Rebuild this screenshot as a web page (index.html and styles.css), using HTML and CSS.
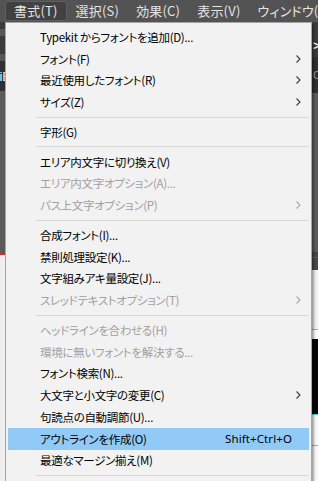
FILE: index.html
```html
<!DOCTYPE html>
<html lang="ja">
<head>
<meta charset="utf-8">
<link rel="stylesheet" href="styles.css">
</head>
<body>
<div class="app">
  <nav class="menubar">
    <span class="mb-item active">書式(T)</span>
    <span class="mb-item">選択(S)</span>
    <span class="mb-item">効果(C)</span>
    <span class="mb-item">表示(V)</span>
    <span class="mb-item">ウィンドウ(W)</span>
  </nav>
  <div class="workspace">
    <div class="strip left">
      <div class="b b-dark1 h7"></div>
      <div class="b b-mid h7"></div>
      <div class="b b-dark1 h18"></div>
      <div class="b b-mid h7"></div>
      <div class="b b-dark2 h30 txt"><span>iE</span></div>
      <div class="b b-gray h163"></div>
      <div class="b b-red"></div>
      <div class="b b-light fill"></div>
    </div>
    <div class="center"></div>
    <div class="strip right">
      <div class="b b-dark1 h13"></div>
      <div class="b b-dark1 h22 glyph"><span>&gt;</span></div>
      <div class="b b-dark2 h36 glyph small"><span>C</span></div>
      <div class="b b-gray h159"></div>
      <div class="b b-dark3 h5"></div>
      <div class="b b-red"></div>
      <div class="b b-dark3 h12"></div>
      <div class="b b-light h59"></div>
      <div class="b b-cyan"></div>
      <div class="b b-white h9"></div>
      <div class="b b-black h75"></div>
      <div class="b b-cyan"></div>
      <div class="b b-white h30"></div>
      <div class="b b-cyan"></div>
      <div class="b b-white fill"></div>
    </div>
  </div>

  <div class="dropdown">
    <div class="item"><span class="label">Typekit からフォントを追加(D)...</span></div>
    <div class="item"><span class="label">フォント(F)</span><span class="sub"><svg viewBox="0 0 5 8" class="chev"><polyline points="0.5,0.5 4,4 0.5,7.5"/></svg></span></div>
    <div class="item"><span class="label">最近使用したフォント(R)</span><span class="sub"><svg viewBox="0 0 5 8" class="chev"><polyline points="0.5,0.5 4,4 0.5,7.5"/></svg></span></div>
    <div class="item"><span class="label">サイズ(Z)</span><span class="sub"><svg viewBox="0 0 5 8" class="chev"><polyline points="0.5,0.5 4,4 0.5,7.5"/></svg></span></div>
    <div class="sep"></div>
    <div class="item"><span class="label">字形(G)</span></div>
    <div class="sep"></div>
    <div class="item"><span class="label">エリア内文字に切り換え(V)</span></div>
    <div class="item disabled"><span class="label">エリア内文字オプション(A)...</span></div>
    <div class="item disabled"><span class="label">パス上文字オプション(P)</span><span class="sub"><svg viewBox="0 0 5 8" class="chev"><polyline points="0.5,0.5 4,4 0.5,7.5"/></svg></span></div>
    <div class="sep"></div>
    <div class="item"><span class="label">合成フォント(I)...</span></div>
    <div class="item"><span class="label">禁則処理設定(K)...</span></div>
    <div class="item"><span class="label">文字組みアキ量設定(J)...</span></div>
    <div class="item disabled"><span class="label">スレッドテキストオプション(T)</span><span class="sub"><svg viewBox="0 0 5 8" class="chev"><polyline points="0.5,0.5 4,4 0.5,7.5"/></svg></span></div>
    <div class="sep"></div>
    <div class="item disabled"><span class="label">ヘッドラインを合わせる(H)</span></div>
    <div class="item disabled"><span class="label">環境に無いフォントを解決する...</span></div>
    <div class="item"><span class="label">フォント検索(N)...</span></div>
    <div class="item"><span class="label">大文字と小文字の変更(C)</span><span class="sub"><svg viewBox="0 0 5 8" class="chev"><polyline points="0.5,0.5 4,4 0.5,7.5"/></svg></span></div>
    <div class="item"><span class="label">句読点の自動調節(U)...</span></div>
    <div class="item hover"><span class="label">アウトラインを作成(O)</span><span class="shortcut">Shift+Ctrl+O</span><span class="sub"></span></div>
    <div class="item"><span class="label">最適なマージン揃え(M)</span></div>
    <div class="sep"></div>
    <div class="item"><span class="label">ルビ(R)</span></div>
  </div>
</div>
</body>
</html>
```

FILE: styles.css
```css
html, body {
  margin: 0;
  padding: 0;
  width: 318px;
  height: 481px;
  overflow: hidden;
}
body {
  font-family: "Noto Sans CJK JP", "Noto Sans", sans-serif;
  background: #535353;
}
.app {
  position: relative;
  width: 318px;
  height: 481px;
  display: flex;
  flex-direction: column;
  overflow: hidden;
}
.menubar {
  height: 22px;
  flex: 0 0 22px;
  display: flex;
  align-items: center;
  gap: 1px;
  padding-left: 5px;
  background: #535353;
  white-space: nowrap;
  overflow: hidden;
}
.mb-item {
  font-size: 13px;
  line-height: 18px;
  color: #e4e4e4;
  padding: 0 7px;
  border: 1px solid transparent;
  border-radius: 3px;
  font-feature-settings: "palt";
  letter-spacing: 0.2px;
}
.mb-item.active {
  background: #414141;
  border-color: #5f5f5f;
  padding: 0 8px;
}
.workspace {
  flex: 1;
  display: flex;
  min-height: 0;
}
.center { flex: 1; }
.strip {
  display: flex;
  flex-direction: column;
}
.strip.left { width: 5px; }
.strip.right { width: 6px; }
.b { flex: 0 0 auto; overflow: hidden; }
.h5 { height: 5px; }
.h7 { height: 7px; }
.h9 { height: 9px; }
.h12 { height: 12px; }
.h13 { height: 13px; }
.h18 { height: 18px; }
.h22 { height: 22px; }
.h30 { height: 30px; }
.h36 { height: 36px; }
.h59 { height: 59px; }
.h75 { height: 75px; }
.h159 { height: 159px; }
.h163 { height: 163px; }
.fill { flex: 1; }
.b-dark1 { background: #3b3b3b; }
.b-dark2 { background: #303030; }
.b-dark3 { background: #474747; }
.b-mid { background: #575757; }
.b-gray { background: #5b5b5b; }
.b-red { height: 1px; background: #e0262b; }
.b-cyan { height: 1px; background: #35d7e6; }
.b-light { background: #efefef; }
.b-white { background: #f7f7f7; }
.b-black { background: #050505; }
.txt {
  display: flex;
  align-items: center;
  justify-content: flex-end;
  color: #f2f2f2;
  font-family: "Liberation Sans", sans-serif;
  font-size: 13px;
}
.txt span { margin-right: -6px; }
.glyph {
  display: flex;
  align-items: center;
  color: #e8e8e8;
  font-family: "Liberation Sans", sans-serif;
  font-size: 12px;
  font-weight: bold;
  padding-left: 1px;
}
.glyph.small { font-weight: normal; color: #9a9a9a; font-size: 11px; }

.dropdown {
  position: absolute;
  left: 5px;
  top: 22px;
  width: 307px;
  box-sizing: border-box;
  background: #f2f2f2;
  border: 1px solid #a5a5a5;
  padding: 3px 2px 2px 2px;
  box-shadow: 2px 2px 2px rgba(0, 0, 0, 0.35);
  font-size: 11.5px;
  color: #000;
  font-feature-settings: "palt";
}
.item {
  height: 21.75px;
  display: flex;
  align-items: center;
  padding-left: 32px;
  white-space: nowrap;
}
.item .label {
  flex: 1;
  letter-spacing: -0.3px;
}
.item.disabled { color: #a0a0a0; }
.item.hover { background: #91c9f7; }
.shortcut {
  font-family: "Noto Sans", sans-serif;
  font-size: 11.5px;
  letter-spacing: 0.1px;
}
.sub {
  width: 17px;
  display: flex;
  justify-content: flex-end;
  align-items: center;
  padding-right: 8px;
  box-sizing: border-box;
}
.chev {
  width: 5px;
  height: 8px;
  fill: none;
  stroke: #3a3a3a;
  stroke-width: 1.1;
}
.disabled .chev { stroke: #a8a8a8; }
.sep {
  height: 8px;
  display: flex;
  align-items: center;
  padding-left: 28px;
}
.sep::after {
  content: "";
  flex: 1;
  height: 1px;
  background: #d7d7d7;
}
```
